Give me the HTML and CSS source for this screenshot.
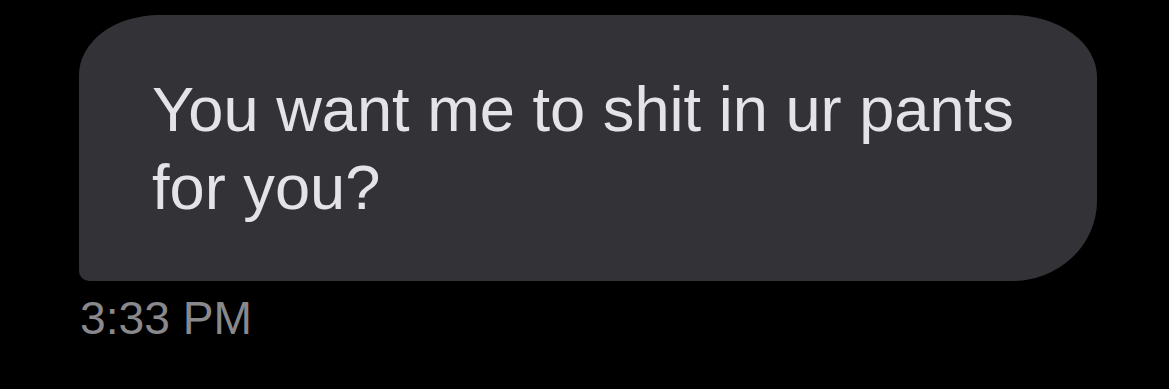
FILE: index.html
```html
<!DOCTYPE html>
<html>
<head>
<meta charset="utf-8">
<link rel="stylesheet" href="styles.css">
</head>
<body>
<div class="thread">
  <div class="bubble">You want me to shit in ur pants for you?</div>
  <div class="time">3:33 PM</div>
</div>
</body>
</html>
```
FILE: styles.css
```css
html, body {
  margin: 0;
  padding: 0;
  background: #000;
  height: 100%;
}
.thread {
  display: flex;
  flex-direction: column;
  align-items: flex-start;
  padding: 15px 0 0 79px;
  gap: 11px;
  font-family: "Liberation Sans", Arial, sans-serif;
}
.bubble {
  box-sizing: border-box;
  width: 1018px;
  padding: 55px 70px 55px 73px;
  background: #333337;
  color: #e4e4e8;
  font-size: 63.2px;
  line-height: 78px;
  border-radius: 80px 85px 85px 10px / 60px 62px 80px 10px;
}
.time {
  color: #88888d;
  font-size: 46.2px;
  line-height: 52px;
  padding-left: 1px;
}
```
